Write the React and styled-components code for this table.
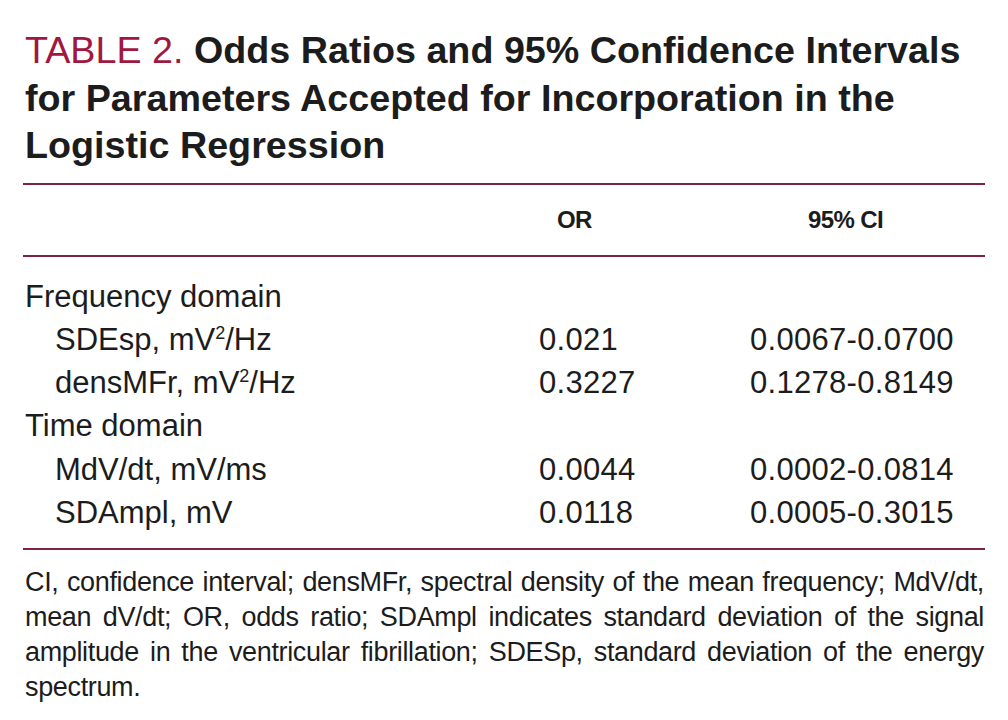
import React from "react";
import styled, { createGlobalStyle } from "styled-components";

const Global = createGlobalStyle`
  html, body { margin: 0; padding: 0; background: #ffffff; }
  body { font-family: "Liberation Sans", Arial, sans-serif; color: #1c1c1c; }
`;

const Page = styled.div`
  width: 1008px;
  height: 720px;
  box-sizing: border-box;
  padding: 27px 23px 0 23px;
  background: #fff;
  overflow: hidden;
`;

const Title = styled.h1`
  margin: 0 0 0 2px;
  font-family: "Liberation Sans", Arial, sans-serif;
  font-size: 37.7px;
  line-height: 47.5px;
  font-weight: 700;
  color: #1c1c1c;
  white-space: nowrap;
`;

const Label = styled.span`
  color: #a0173f;
  font-weight: 400;
`;

const Rule = styled.div`
  height: 2px;
  background: #7d2445;
  margin-top: ${(p) => p.$mt || 0}px;
`;

const HeadRow = styled.div`
  display: grid;
  grid-template-columns: 514px 211px 1fr;
`;

const HeadCell = styled.div`
  height: 70px;
  display: flex;
  align-items: center;
  padding-left: ${(p) => p.$pl || 0}px;
  font-family: "Liberation Sans", Arial, sans-serif;
  font-weight: 700;
  font-size: 24px;
  letter-spacing: -0.6px;
  color: #1c1c1c;
`;

const Body = styled.div`
  display: grid;
  grid-template-columns: 514px 211px 1fr;
  padding: 18px 0 14px 0;
`;

const Cell = styled.div`
  font-family: "Liberation Sans", Arial, sans-serif;
  font-size: 31px;
  line-height: 43.3px;
  height: 43.3px;
  white-space: nowrap;
  padding-left: ${(p) => (p.$indent ? 32 : 2)}px;
  color: #1c1c1c;
  letter-spacing: ${(p) => (p.$num ? "0.3px" : "0px")};
`;

const Sup = styled.sup`
  font-size: 18px;
  line-height: 0;
  vertical-align: 11px;
`;

const Note = styled.div`
  padding: 15px 1px 0 2px;
  font-family: "Liberation Sans", Arial, sans-serif;
  font-size: 27px;
  color: #1c1c1c;
`;

const NoteLine = styled.div`
  line-height: 35px;
  height: 35px;
  white-space: nowrap;
  text-align: ${(p) => (p.$last ? "left" : "justify")};
  text-align-last: ${(p) => (p.$last ? "left" : "justify")};
  letter-spacing: -0.35px;
`;

const rows = [
  { label: "Frequency domain" },
  { label: ["SDEsp, mV", "2", "/Hz"], indent: true, or: "0.021", ci: "0.0067-0.0700" },
  { label: ["densMFr, mV", "2", "/Hz"], indent: true, or: "0.3227", ci: "0.1278-0.8149" },
  { label: "Time domain" },
  { label: "MdV/dt, mV/ms", indent: true, or: "0.0044", ci: "0.0002-0.0814" },
  { label: "SDAmpl, mV", indent: true, or: "0.0118", ci: "0.0005-0.3015" },
];

const noteLines = [
  "CI, confidence interval; densMFr, spectral density of the mean frequency; MdV/dt,",
  "mean dV/dt; OR, odds ratio; SDAmpl indicates standard deviation of the signal",
  "amplitude in the ventricular fibrillation; SDESp, standard deviation of the energy",
  "spectrum.",
];

export default function App() {
  return (
    <Page>
      <Global />
      <Title>
        <Label>TABLE 2.</Label> Odds Ratios and 95% Confidence Intervals
        <br />
        for Parameters Accepted for Incorporation in the
        <br />
        Logistic Regression
      </Title>
      <Rule $mt={13} />
      <HeadRow>
        <HeadCell />
        <HeadCell $pl={20}>OR</HeadCell>
        <HeadCell $pl={60}>95% CI</HeadCell>
      </HeadRow>
      <Rule />
      <Body>
        {rows.map((r, i) => (
          <React.Fragment key={i}>
            <Cell $indent={r.indent}>
              {Array.isArray(r.label) ? (
                <>
                  {r.label[0]}
                  <Sup>{r.label[1]}</Sup>
                  {r.label[2]}
                </>
              ) : (
                r.label
              )}
            </Cell>
            <Cell $num>{r.or || ""}</Cell>
            <Cell $num>{r.ci || ""}</Cell>
          </React.Fragment>
        ))}
      </Body>
      <Rule />
      <Note>
        {noteLines.map((l, i) => (
          <NoteLine key={i} $last={i === noteLines.length - 1}>
            {l}
          </NoteLine>
        ))}
      </Note>
    </Page>
  );
}
